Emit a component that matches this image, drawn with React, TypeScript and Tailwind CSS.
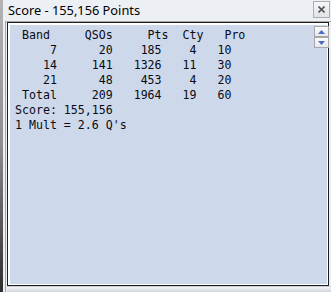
import React from "react";

const lines = [
  " Band     QSOs     Pts  Cty   Pro",
  "     7      20    185    4   10",
  "    14     141   1326   11   30",
  "    21      48    453    4   20",
  " Total     209   1964   19   60",
  "Score: 155,156",
  "1 Mult = 2.6 Q's",
];

function ScrollButton({ up }: { up?: boolean }) {
  return (
    <div className="w-[15px] h-[11px] border border-[#a7a7a7] bg-gradient-to-b from-[#fbfbfb] to-[#e6e8ec] flex items-center justify-center">
      <svg width="7" height="4" viewBox="0 0 7 4">
        {up ? (
          <polygon points="0,4 3.5,0 7,4" fill="#4a6cc4" />
        ) : (
          <polygon points="0,0 3.5,4 7,0" fill="#4a6cc4" />
        )}
      </svg>
    </div>
  );
}

export default function App() {
  return (
    <div className="w-[331px] h-[292px] overflow-hidden flex bg-[#eceff3]">
      {/* window frame edge */}
      <div className="w-[3px] h-full bg-gradient-to-b from-[#b4b4b4] via-[#8c8c8c] to-[#2e2e2e]" />

      <div className="flex-1 flex flex-col">
        {/* Title bar */}
        <div className="h-[21px] flex items-center justify-between pl-[5px] pr-[1px]">
          <span
            className="text-[12.8px] text-black leading-none pb-[1px]"
            style={{ fontFamily: '"Noto Sans", "Open Sans", sans-serif' }}
          >
            Score - 155,156 Points
          </span>
          <div className="w-[17px] h-[17px] mt-[-3px] border border-[#a9adb4] bg-gradient-to-b from-[#f6f7f9] to-[#dfe3e8] flex items-center justify-center">
            <svg width="7" height="7" viewBox="0 0 7 7">
              <path d="M0.5 0.5 L6.5 6.5 M6.5 0.5 L0.5 6.5" stroke="#555" strokeWidth="1.6" />
            </svg>
          </div>
        </div>

        {/* Client area */}
        <div className="flex-1 ml-[2px] border-t border-l border-[#a6a6a6] pl-[1px] flex flex-col">
          <div className="h-[264px] mr-[2px] border border-[#1f1f1f] bg-white pt-[2px] pl-[2px] pr-[1px] pb-[1px]">
            <div className="relative h-full bg-[#cdd9ea] pl-[5px] pt-[3px]">
              <pre
                className="m-0 text-[11.6px] leading-[15px] text-[#0a0a14]"
                style={{ fontFamily: '"DejaVu Sans Mono", "Liberation Mono", monospace' }}
              >
                {lines.join("\n")}
              </pre>
              <div className="absolute top-[1px] right-[-2px] flex flex-col">
                <ScrollButton up />
                <ScrollButton />
              </div>
            </div>
          </div>
          <div className="flex-1 border-t border-[#c9ced6] bg-gradient-to-b from-[#f4f5f7] to-[#cfd4db]" />
        </div>
      </div>
    </div>
  );
}
